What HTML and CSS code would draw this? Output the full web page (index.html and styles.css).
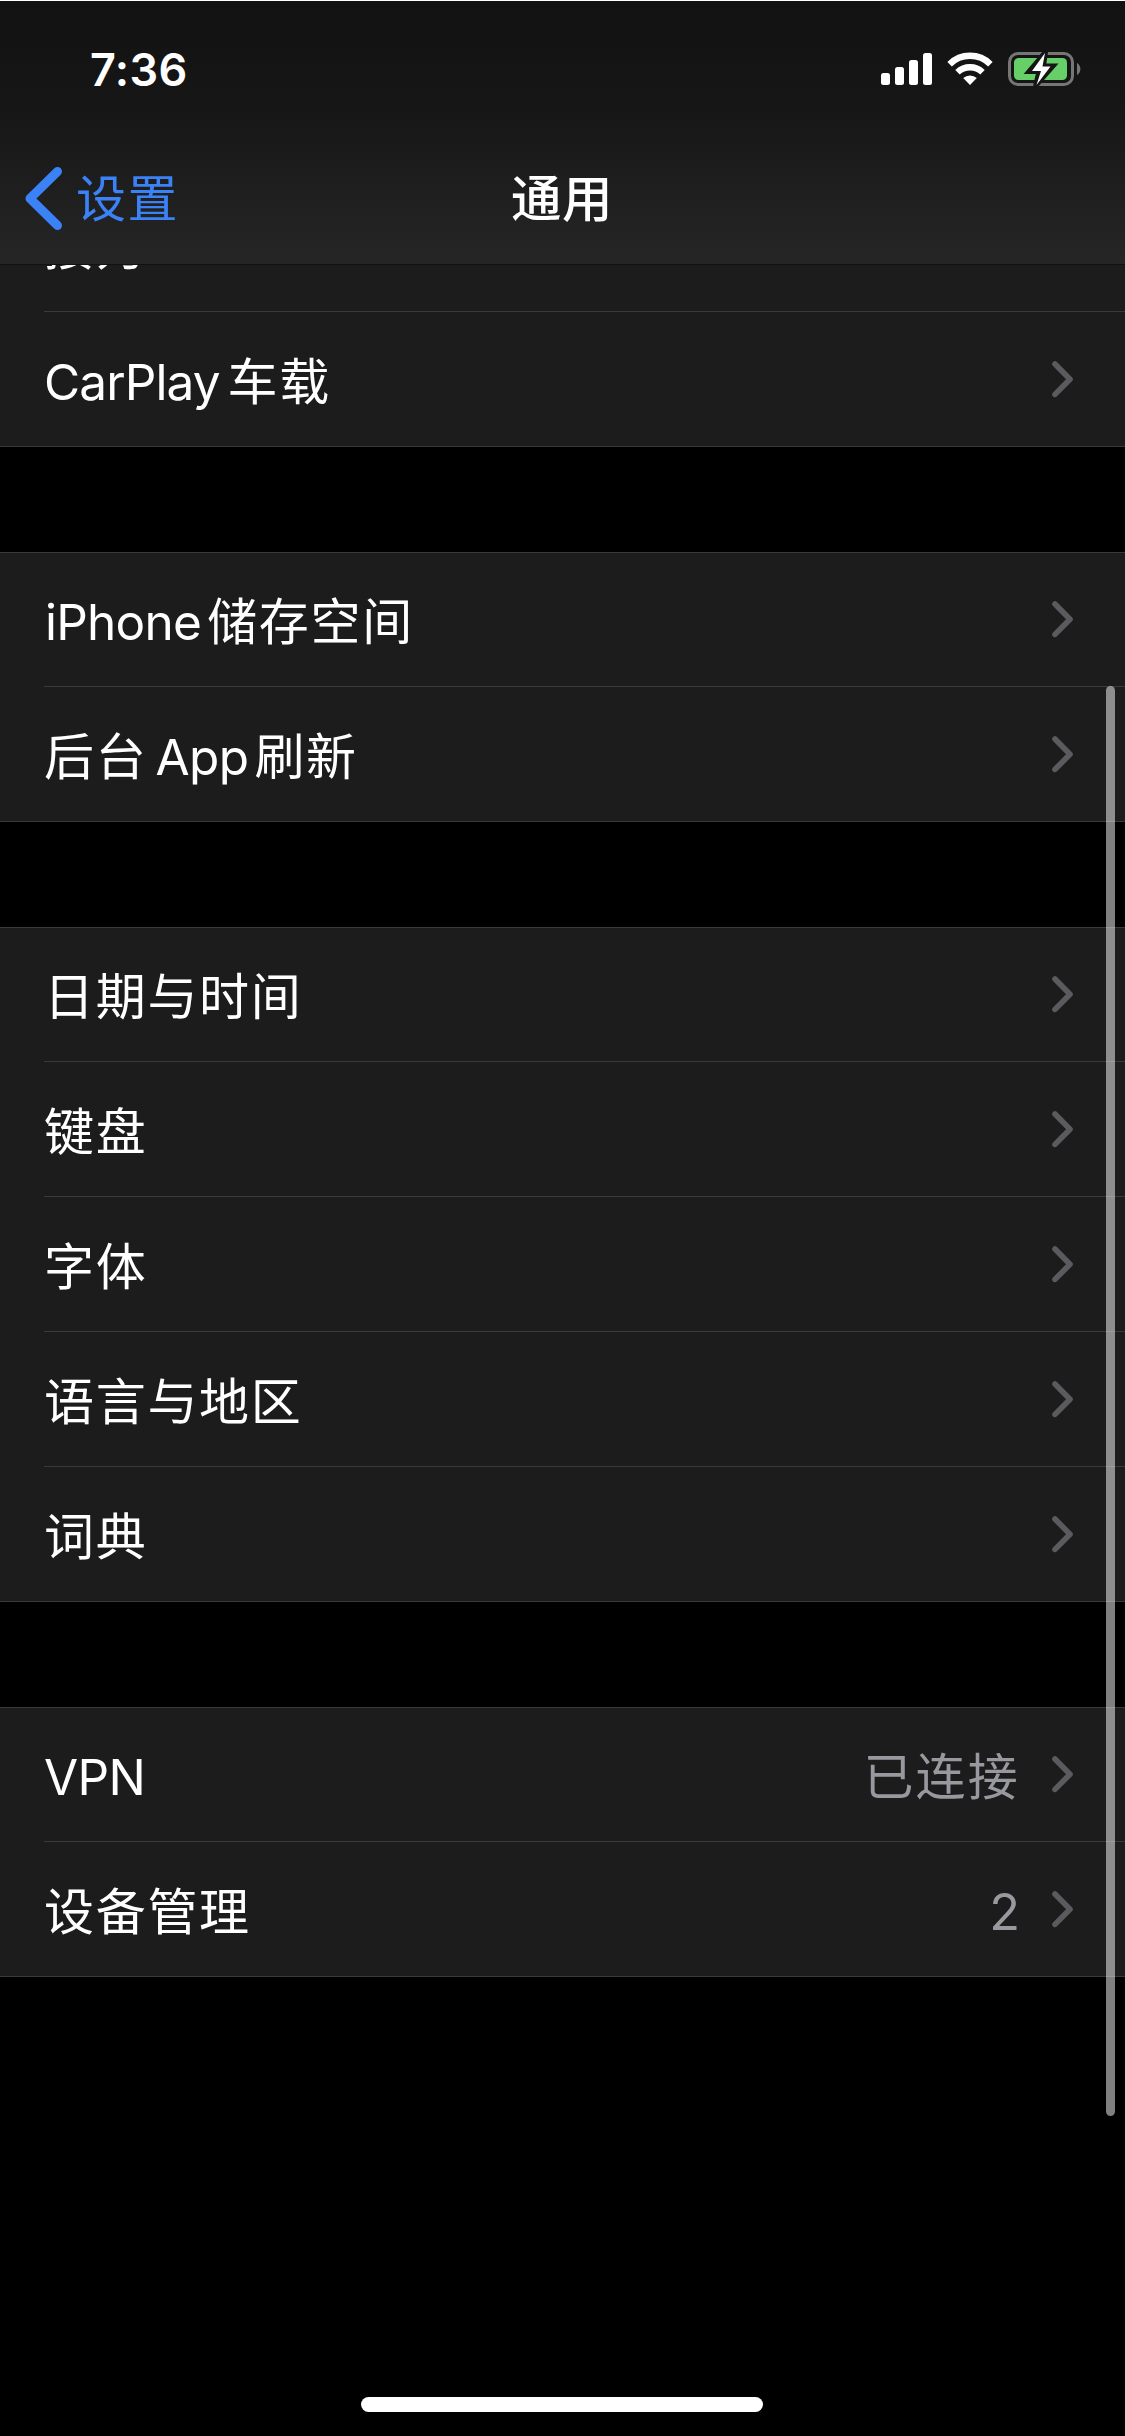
FILE: index.html
```html
<!DOCTYPE html>
<html lang="zh-CN">
<head>
<meta charset="utf-8">
<title>通用</title>
<link rel="stylesheet" href="styles.css">
</head>
<body>
<svg class="defs" width="0" height="0">
  <symbol id="chevron" viewBox="0 0 22 37"><path d="M3 3 18 18.200 3 33.400" fill="none" stroke="currentColor" stroke-width="5.600" stroke-linecap="round" stroke-linejoin="round"/></symbol>
</svg>
<div class="screen">
  <header class="header">
    <div class="status">
      <span class="time">7:36</span>
      <div class="indicators">
        <svg class="signal" width="51" height="33" viewBox="0 0 51 33" fill="#fff"><rect x="0" y="20" width="9" height="12" rx="2.500"/><rect x="14" y="14" width="9" height="18" rx="2.500"/><rect x="28" y="7" width="9" height="25" rx="2.500"/><rect x="42" y="0" width="9" height="32" rx="2.500"/></svg>
        <svg class="wifi" width="46" height="34" viewBox="0 0 46 34"><path d="M2.600 12.200A29 29 0 0 1 43.400 12.200M10.500 20.300A18 18 0 0 1 35.500 20.300" fill="none" stroke="#fff" stroke-width="6.400"/><path d="M23 33 16.200 26.100A10 10 0 0 1 29.800 26.100Z" fill="#fff"/></svg>
        <svg class="battery" width="74" height="34" viewBox="0 0 74 34"><rect x="1.500" y="1.500" width="63" height="31" rx="8.500" fill="none" stroke="#767676" stroke-width="3"/><rect x="6" y="6" width="53" height="22" rx="4.500" fill="#67cf67"/><path d="M69 11A7 7 0 0 1 69 23Z" fill="#767676"/><path d="M37.500 0 21 19.500H31L27.500 34 45 14H35.500Z" fill="#fff" stroke="#151515" stroke-width="5"/><path d="M37 1 24 19H33L28.500 33 42.500 14.500H34.500Z" fill="#fff"/></svg>
      </div>
    </div>
    <nav class="nav">
      <a class="back"><svg width="37" height="64" viewBox="0 0 37 64"><path d="M32.500 4.500 5 31.500 32.500 58.500" fill="none" stroke="currentColor" stroke-width="9" stroke-linecap="round" stroke-linejoin="round"/></svg><span class="back-text">设置</span></a>
      <h1 class="title">通用</h1>
    </nav>
  </header>
  <main class="list">
    <section class="group">
      <div class="row clipped"><span class="label">接力</span></div>
      <div class="row"><span class="label"><span class="latin carplay">CarPlay</span>车载</span><svg class="chev"><use href="#chevron"/></svg></div>
    </section>
    <section class="group">
      <div class="row"><span class="label"><span class="latin iphone">iPhone</span>储存空间</span><svg class="chev"><use href="#chevron"/></svg></div>
      <div class="row"><span class="label">后台<span class="latin app">App</span>刷新</span><svg class="chev"><use href="#chevron"/></svg></div>
    </section>
    <section class="group">
      <div class="row"><span class="label">日期与时间</span><svg class="chev"><use href="#chevron"/></svg></div>
      <div class="row"><span class="label">键盘</span><svg class="chev"><use href="#chevron"/></svg></div>
      <div class="row"><span class="label">字体</span><svg class="chev"><use href="#chevron"/></svg></div>
      <div class="row"><span class="label">语言与地区</span><svg class="chev"><use href="#chevron"/></svg></div>
      <div class="row"><span class="label">词典</span><svg class="chev"><use href="#chevron"/></svg></div>
    </section>
    <section class="group">
      <div class="row"><span class="label"><span class="latin vpn">VPN</span></span><span class="value">已连接</span><svg class="chev"><use href="#chevron"/></svg></div>
      <div class="row"><span class="label">设备管理</span><span class="value"><span class="latin count">2</span></span><svg class="chev"><use href="#chevron"/></svg></div>
    </section>
  </main>
  <div class="scrollbar"></div>
  <div class="home"></div>
</div>
</body>
</html>
```
FILE: styles.css
```css
* { box-sizing: border-box; }
body { margin: 0; background: #000; }
.defs { position: absolute; }
.screen {
  position: relative;
  width: 1125px;
  height: 2436px;
  overflow: hidden;
  background: #000;
  color: #fff;
  font-family: Inter, "Noto Sans CJK SC", sans-serif;
  display: flex;
  flex-direction: column;
}
.header {
  height: 265px;
  flex: none;
  border-top: 1px solid #fff;
  border-bottom: 1px solid #121212;
  background: linear-gradient(#121212, #161616 40%, #262626);
}
.status {
  height: 131px;
  padding: 0 43px 0 90px;
  display: flex;
  justify-content: space-between;
}
.time {
  margin-top: 39px;
  font: 600 45px/60px Inter, sans-serif;
  letter-spacing: 0.400px;
}
.indicators {
  display: flex;
  align-items: flex-start;
  padding-top: 51px;
}
.signal { margin-top: 1px; margin-right: 15px; }
.wifi { margin-right: 15px; }
.nav {
  height: 132px;
  display: grid;
  grid-template-columns: 1fr auto 1fr;
  align-items: center;
}
.back {
  display: flex;
  align-items: center;
  gap: 14px;
  padding: 2px 0 0 25px;
  color: #3b82f7;
  font: 400 50px/70px "Noto Sans CJK SC", sans-serif;
  letter-spacing: 1.500px;
}
.back-text { padding-bottom: 8px; }
.title {
  margin: 0;
  padding: 0 1px 7px 0;
  font: 500 50.500px/70px "Noto Sans CJK SC", sans-serif;
  letter-spacing: 0.500px;
}
.list { display: flex; flex-direction: column; gap: 105px; }
.group { background: #1c1c1c; box-shadow: inset 0 1px #3a3a3c; }
.group:first-child { box-shadow: none; }
.row {
  height: 135px;
  margin-left: 44px;
  padding-right: 51px;
  border-bottom: 1px solid #3a3a3c;
  display: flex;
  align-items: center;
}
.row:last-child { margin-left: 0; padding-left: 44px; }
.row.clipped { height: 47px; overflow: hidden; align-items: flex-end; }
.label, .value {
  font: 400 50px/72px "Noto Sans CJK SC", sans-serif;
  letter-spacing: 1.700px;
  padding-bottom: 3px;
  white-space: nowrap;
}
.label { flex: 1; }
.clipped .label { margin-bottom: 29px; }
.value { color: #98989f; margin-right: 32px; letter-spacing: 2.200px; }
.latin { font-family: Inter, sans-serif; font-size: 49.500px; line-height: 0; letter-spacing: 0; }
.carplay { margin-right: 8px; letter-spacing: -0.900px; }
.iphone { margin-left: 1px; margin-right: 6px; letter-spacing: -0.750px; }
.app { margin: 0 6px 0 8px; letter-spacing: -0.600px; }
.vpn { letter-spacing: -0.600px; }
.count { font-size: 50.500px; }
.chev { width: 22px; height: 37px; flex: none; color: #5b5b5f; }
.scrollbar {
  position: absolute;
  left: 1106px;
  top: 686px;
  width: 9px;
  height: 1430px;
  border-radius: 5px;
  background: rgba(255, 255, 255, 0.5);
}
.home {
  position: absolute;
  left: 361px;
  top: 2397px;
  width: 402px;
  height: 15px;
  border-radius: 8px;
  background: #fff;
}
```
